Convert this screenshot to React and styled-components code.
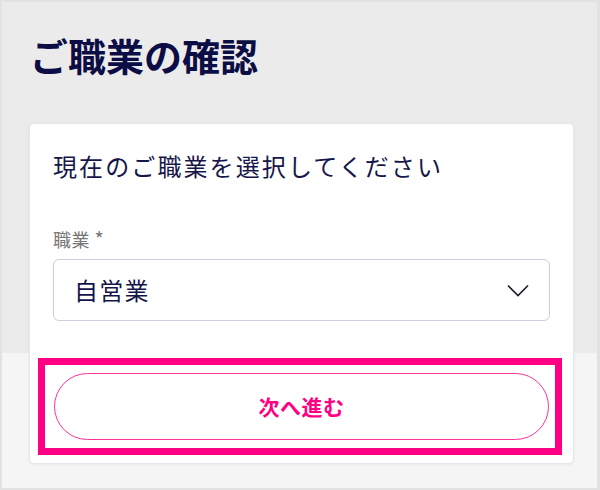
import React from "react";
import styled, { createGlobalStyle } from "styled-components";

const GlobalStyle = createGlobalStyle`
  html, body {
    margin: 0;
    padding: 0;
    background: #ffffff;
  }
  * {
    box-sizing: border-box;
  }
`;

const Frame = styled.div`
  width: 600px;
  height: 490px;
  border: 2px solid #e2e2e2;
  border-right-width: 3px;
  background: linear-gradient(to bottom, #ebebeb 0, #ebebeb 351px, #f5f5f5 351px);
  font-family: "Noto Sans CJK JP", "Noto Sans", sans-serif;
  color: #13134a;
  overflow: hidden;
`;

const Header = styled.header`
  padding: 34px 28px 0;
`;

const Title = styled.h1`
  margin: 0;
  font-size: 38px;
  line-height: 1;
  font-weight: 700;
  color: #0d0d45;
`;

const Card = styled.section`
  margin: 49px 0 0 27px;
  width: 545px;
  height: 341px;
  background: #ffffff;
  border: 1px solid #e6e6ef;
  border-radius: 5px;
  box-shadow: 0 1px 3px rgba(0, 0, 0, 0.06);
  padding: 30px 23px 8px;
  display: flex;
  flex-direction: column;
`;

const Lead = styled.p`
  margin: 0;
  font-size: 24px;
  line-height: 1;
  letter-spacing: 2.1px;
  color: #16164a;
`;

const Label = styled.label`
  margin-top: 51px;
  height: 18px;
  font-size: 18px;
  line-height: 1;
  letter-spacing: 0.5px;
  color: #767676;
`;

const Required = styled.span`
  font-size: 20px;
  line-height: 1;
`;

const Select = styled.div`
  margin-top: 12px;
  height: 62px;
  border: 1px solid #cdcde0;
  border-radius: 6px;
  padding: 0 20px 0 20px;
  display: flex;
  align-items: center;
  justify-content: space-between;
`;

const SelectValue = styled.span`
  font-size: 24px;
  line-height: 1;
  letter-spacing: 1.2px;
  color: #14144a;
`;

const Highlight = styled.div`
  margin: 37px -12px 0 -15px;
  border: 7px solid #ff0084;
  padding: 8px 6px 8px 9px;
`;

const NextButton = styled.button`
  width: 100%;
  height: 67px;
  border: 1px solid #ff3399;
  border-radius: 34px;
  background: #ffffff;
  color: #ff0084;
  font-family: inherit;
  font-size: 21px;
  font-weight: 700;
  line-height: 1;
  letter-spacing: 0.5px;
  display: flex;
  align-items: center;
  justify-content: center;
  cursor: pointer;
`;

const Chevron = () => (
  <svg width="22" height="13" viewBox="0 0 22 13" fill="none">
    <path d="M1 1.5 L11 11.5 L21 1.5" stroke="#1c1c2a" strokeWidth="1.6" />
  </svg>
);

export default function App() {
  return (
    <>
      <GlobalStyle />
      <Frame>
        <Header>
          <Title>ご職業の確認</Title>
        </Header>
        <Card>
          <Lead>現在のご職業を選択してください</Lead>
          <Label>
            職業 <Required>*</Required>
          </Label>
          <Select>
            <SelectValue>自営業</SelectValue>
            <Chevron />
          </Select>
          <Highlight>
            <NextButton>次へ進む</NextButton>
          </Highlight>
        </Card>
      </Frame>
    </>
  );
}
